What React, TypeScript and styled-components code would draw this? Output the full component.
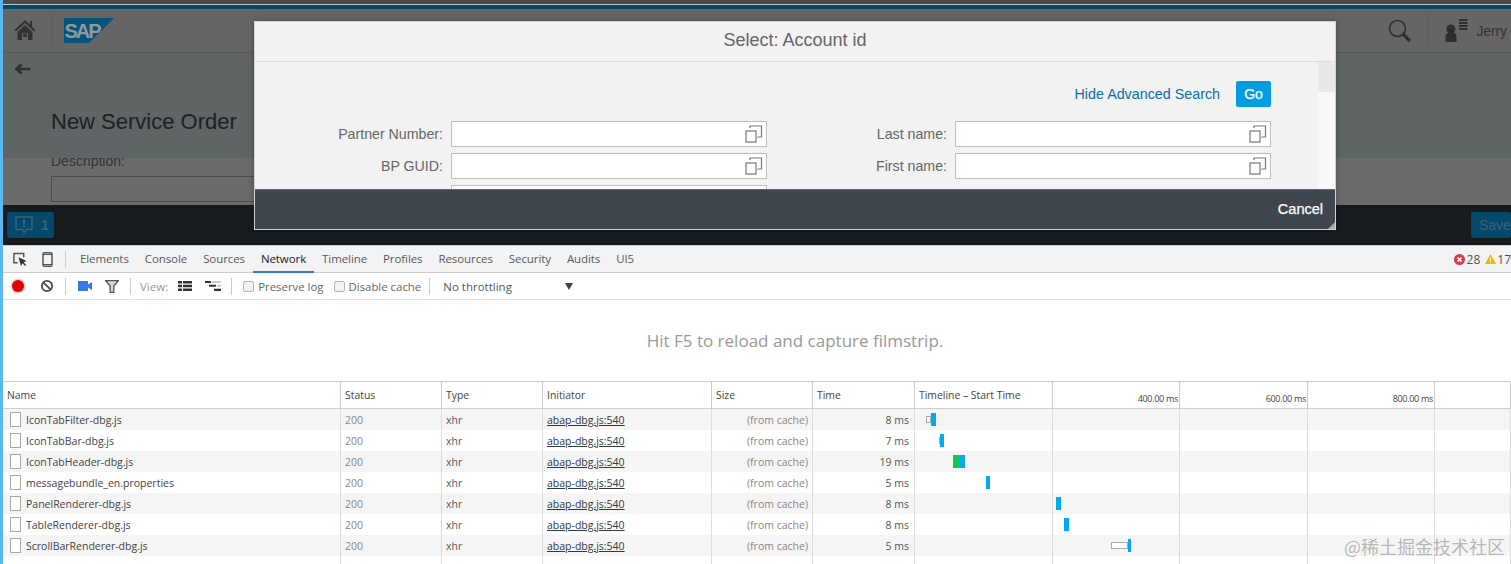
import React from "react";
import styled, { createGlobalStyle } from "styled-components";

const Global = createGlobalStyle`
  html, body { margin: 0; padding: 0; background: #fff; }
  body { font-family: "Liberation Sans", Arial, sans-serif; }
  * { box-sizing: border-box; }
`;

const Page = styled.div`
  width: 1511px;
  height: 564px;
  display: flex;
  overflow: hidden;
  position: relative;
`;
const Stripe = styled.div`
  width: 3px;
  flex: none;
  background: #5ab7f1;
`;
const Main = styled.div`
  flex: 1;
  min-width: 0;
  display: flex;
  flex-direction: column;
`;

/* ---------- dimmed application ---------- */
const AppArea = styled.div`
  height: 246px;
  flex: none;
  display: flex;
  flex-direction: column;
  border-bottom: 1px solid #cfcfcf;
`;
const TopStrip = styled.div`
  height: 5px;
  flex: none;
  background: #4b4b4b;
  border-bottom: 1px solid #c4c4c4;
`;
const BlueBand = styled.div`
  height: 4px;
  flex: none;
  background: #03476a;
`;
const Shell = styled.header`
  height: 44px;
  flex: none;
  display: flex;
  align-items: center;
  background: #656565;
  border-bottom: 1px solid #595959;
  padding: 0 4px 0 11px;
`;
const ShellDivider = styled.div<{ $ml: number; $mr: number }>`
  width: 1px;
  height: 32px;
  background: #5a5a5a;
  margin: 0 ${(p) => p.$mr}px 0 ${(p) => p.$ml}px;
`;
const ShellSpacer = styled.div`
  flex: 1;
`;
const UserName = styled.span`
  font-size: 14px;
  color: #333;
  margin-left: 8px;
  white-space: nowrap;
  letter-spacing: -0.1px;
`;
const SubHeader = styled.div`
  height: 105px;
  flex: none;
  background: #5f6464;
  padding: 10px 0 0 11px;
  display: flex;
  flex-direction: column;
`;
const PageTitle = styled.h1`
  margin: 33px 0 0 37px;
  font-size: 22px;
  line-height: 28px;
  font-weight: 400;
  color: #1e2021;
`;
const FormArea = styled.div`
  height: 47px;
  flex: none;
  background: #6b6b6b;
  padding-left: 48px;
  overflow: hidden;
`;
const FormLabel = styled.div`
  font-size: 14px;
  line-height: 16px;
  color: #333;
  margin-top: -5px;
`;
const FormInput = styled.div`
  width: 700px;
  height: 26px;
  margin-top: 7px;
  border: 1px solid #4c4c4c;
`;
const AppFooter = styled.footer`
  height: 40px;
  flex: none;
  background: #171b1e;
  display: flex;
  align-items: center;
  justify-content: space-between;
  padding: 0 0 0 4px;
`;
const FooterButton = styled.div<{ $width: number }>`
  width: ${(p) => p.$width}px;
  height: 26px;
  background: #03496a;
  border-radius: 2px;
  display: flex;
  align-items: center;
  padding-left: 8px;
  gap: 8px;
  font-size: 14px;
  color: #3d6273;
  font-weight: 400;
  overflow: hidden;
  white-space: nowrap;
`;
const CountText = styled.span`
  font-weight: 700;
  font-size: 14px;
`;

/* ---------- dialog ---------- */
const Dialog = styled.div`
  position: absolute;
  left: 254px;
  top: 21px;
  width: 1082px;
  height: 209px;
  display: flex;
  flex-direction: column;
  background: #f2f2f2;
  border: 1px solid #d2d2d2;
  box-shadow: 0 0 6px rgba(0, 0, 0, 0.3);
`;
const DialogHeader = styled.div`
  height: 40px;
  flex: none;
  display: flex;
  align-items: center;
  justify-content: center;
  font-size: 18px;
  color: #666;
  padding: 0 0 2px 0;
  border-bottom: 1px solid #dcdcdc;
`;
const DialogBody = styled.div`
  flex: 1;
  min-height: 0;
  display: flex;
  overflow: hidden;
`;
const SearchForm = styled.div`
  flex: 1;
  padding: 19px 47px 0 0;
`;
const SearchActions = styled.div`
  display: flex;
  justify-content: flex-end;
  align-items: center;
  gap: 16px;
  height: 26px;
  margin-bottom: 14px;
`;
const SearchLink = styled.a`
  font-size: 14.3px;
  color: #0a6ea6;
`;
const GoButton = styled.div`
  width: 35px;
  height: 26px;
  border-radius: 2px;
  background: #009de0;
  color: #fff;
  font-size: 14px;
  -webkit-text-stroke: 0.25px #fff;
  display: flex;
  align-items: center;
  justify-content: center;
`;
const FieldGrid = styled.div`
  display: grid;
  grid-template-columns: 196px 316px 188px 316px;
  grid-auto-rows: 26px;
  row-gap: 6px;
`;
const FieldLabel = styled.label`
  font-size: 14.2px;
  color: #666;
  text-align: right;
  padding-right: 8px;
  line-height: 26px;
  white-space: nowrap;
`;
const FieldBox = styled.div`
  background: #fff;
  border: 1px solid #bfbfbf;
  display: flex;
  align-items: center;
  justify-content: flex-end;
  padding-right: 3px;
`;
const Scrollbar = styled.div`
  width: 17px;
  flex: none;
  background: #f8f8f8;
`;
const ScrollThumb = styled.div`
  height: 30px;
  background: #e8e8e8;
`;
const DialogFooter = styled.div`
  height: 40px;
  flex: none;
  background: #3f464d;
  border-top: 1px solid #5f666c;
  display: flex;
  align-items: center;
  justify-content: flex-end;
  padding: 0 12px 2px 0;
  position: relative;
  color: #fff;
  font-size: 14.5px;
  -webkit-text-stroke: 0.25px #fff;
`;
const ResizeGrip = styled.div`
  position: absolute;
  right: 0;
  bottom: 0;
  width: 0;
  height: 0;
  border-left: 7px solid transparent;
  border-bottom: 7px solid #a9a9a9;
`;

/* ---------- devtools ---------- */
const Devtools = styled.div`
  flex: 1;
  min-height: 0;
  display: flex;
  flex-direction: column;
  font-family: "Open Sans", "Liberation Sans", sans-serif;
  font-size: 11px;
  color: #333;
  background: #fff;
`;
const TabBar = styled.div`
  height: 27px;
  flex: none;
  display: flex;
  align-items: stretch;
  background: #f3f3f3;
  border-bottom: 1px solid #ccc;
  position: relative;
`;
const ToolSlot = styled.div<{ $w: number; $ml?: number }>`
  width: ${(p) => p.$w}px;
  margin-left: ${(p) => p.$ml ?? 0}px;
  flex: none;
  display: flex;
  align-items: center;
  justify-content: center;
`;
const ToolSep = styled.div<{ $ml: number; $mr: number }>`
  width: 1px;
  height: 17px;
  align-self: center;
  flex: none;
  background: #ccc;
  margin: 0 ${(p) => p.$mr}px 0 ${(p) => p.$ml}px;
`;
const Tab = styled.div<{ $active?: boolean }>`
  padding: 0 8px;
  display: flex;
  align-items: center;
  font-size: 11.5px;
  letter-spacing: -0.09px;
  color: ${(p) => (p.$active ? "#222" : "#5a5a5a")};
  border-bottom: 2px solid ${(p) => (p.$active ? "#3879d9" : "transparent")};
  margin-bottom: -1px;
`;
const Status = styled.div`
  margin-left: auto;
  display: flex;
  align-items: center;
  font-size: 12px;
  color: #555;
  white-space: nowrap;
`;
const StatusCount = styled.span<{ $ml: number; $mr: number }>`
  margin: 0 ${(p) => p.$mr}px 0 ${(p) => p.$ml}px;
`;
const Toolbar = styled.div`
  height: 27px;
  flex: none;
  display: flex;
  align-items: center;
  border-bottom: 1px solid #e2e2e2;
`;
const MutedLabel = styled.span`
  color: #999;
  font-size: 11.5px;
`;
const CheckWrap = styled.label<{ $ml: number }>`
  display: flex;
  align-items: center;
  gap: 4px;
  margin-left: ${(p) => p.$ml}px;
  color: #666;
  font-size: 11.4px;
  white-space: nowrap;
`;
const CheckBox = styled.span`
  width: 11px;
  height: 11px;
  border: 1px solid #b5b5b5;
  border-radius: 2px;
  background: #f2f2f2;
`;
const ThrottleText = styled.span`
  margin-left: 13px;
  width: 122px;
  color: #555;
  font-size: 11.5px;
  white-space: nowrap;
`;
const Caret = styled.span`
  width: 0;
  height: 0;
  border-left: 4px solid transparent;
  border-right: 4px solid transparent;
  border-top: 7px solid #444;
`;
const Filmstrip = styled.div`
  height: 81px;
  flex: none;
  display: flex;
  align-items: center;
  justify-content: center;
  font-size: 17px;
  color: #999;
  padding: 0 0 0 76px;
`;
const COLUMNS = "338px 101px 101px 169px 101px 102px 138px 127px 128px 127px 1fr";
const HeaderRow = styled.div`
  height: 28px;
  flex: none;
  display: grid;
  grid-template-columns: ${COLUMNS};
  border-top: 1px solid #ccc;
  border-bottom: 1px solid #ccc;
`;
const HeadCell = styled.div`
  border-right: 1px solid #ccc;
  padding-left: 4px;
  display: flex;
  align-items: center;
  font-size: 10.4px;
  color: #444;
  white-space: nowrap;
  overflow: hidden;
`;
const TickCell = styled.div`
  border-right: 1px solid #ccc;
  display: flex;
  align-items: flex-end;
  justify-content: flex-end;
  padding: 0 1px 3px 0;
  font-size: 9px;
  letter-spacing: -0.3px;
  color: #444;
  white-space: nowrap;
`;
const Row = styled.div<{ $striped: boolean }>`
  height: 21px;
  flex: none;
  display: grid;
  grid-template-columns: ${COLUMNS};
  background: ${(p) => (p.$striped ? "#f5f5f5" : "#fff")};
  position: relative;
`;
const Cell = styled.div<{ $align?: string; $tone?: string; $pr?: number }>`
  border-right: 1px solid #dcdcdc;
  padding: 0 ${(p) => p.$pr ?? 4}px 0 4px;
  display: flex;
  align-items: center;
  justify-content: ${(p) => p.$align ?? "flex-start"};
  font-size: 10.5px;
  color: ${(p) => p.$tone ?? "#444"};
  white-space: nowrap;
  overflow: hidden;
`;
const NameCell = styled(Cell)`
  padding-left: 7px;
  gap: 5px;
`;
const FileIcon = styled.span`
  width: 11px;
  height: 15px;
  flex: none;
  background: #fff;
  border: 1px solid #a8a8a8;
`;
const InitiatorLink = styled.span`
  text-decoration: underline;
  color: #303942;
`;
const Bar = styled.div<{ $left: number; $width: number; $color: string }>`
  position: absolute;
  top: 4px;
  height: 13px;
  left: ${(p) => p.$left - 3}px;
  width: ${(p) => p.$width}px;
  background: ${(p) => p.$color};
`;
const WaitBar = styled.div<{ $left: number; $width: number }>`
  position: absolute;
  top: 7px;
  height: 7px;
  left: ${(p) => p.$left - 3}px;
  width: ${(p) => p.$width}px;
  background: #fff;
  border: 1px solid #a8a8a8;
`;
const Watermark = styled.div`
  position: absolute;
  right: 6px;
  bottom: 8px;
  font-family: "Noto Sans CJK SC", "Liberation Sans", sans-serif;
  font-size: 18px;
  line-height: 20px;
  color: rgba(130, 130, 130, 0.55);
  white-space: nowrap;
`;

/* ---------- icons ---------- */
const HomeIcon = () => (
  <svg width="22" height="21" viewBox="0 0 22 21">
    <path d="M11 0 L0.5 10 L2 11.5 L11 3 L20 11.5 L21.5 10 L18 6.7 V1 H16 V4.8 Z" fill="#333" />
    <path d="M3.5 12 L11 5 L18.500 12 V20 H14 V13 H8 V20 H3.500 Z M9 13.500 H13 V17 H9 Z" fill="#333" fillRule="evenodd" />
  </svg>
);
const SapLogo = () => (
  <svg width="50" height="25" viewBox="0 0 50 25" style={{ display: "block" }}>
    <polygon points="0,0 50,0 25,25 0,25" fill="#04547c" />
    <text x="0.5" y="20" fontFamily="Liberation Sans" fontWeight="700" fontSize="20" fill="#8f9a9f" textLength="37">
      SAP
    </text>
  </svg>
);
const BackArrow = () => (
  <svg width="17" height="12" viewBox="0 0 17 12" style={{ display: "block" }}>
    <path d="M6.500 0.500 L8.500 2.400 L5.800 4.700 H16.500 V7.300 H5.800 L8.500 9.600 L6.500 11.500 L0.500 6 Z" fill="#2e2e2e" />
  </svg>
);
const SearchIcon = () => (
  <svg width="24" height="24" viewBox="0 0 24 24">
    <circle cx="9.500" cy="9.500" r="8" fill="none" stroke="#2f2f2f" strokeWidth="1.600" />
    <path d="M15 15 L22 22" stroke="#2f2f2f" strokeWidth="3.200" />
  </svg>
);
const UserIcon = () => (
  <svg width="23" height="23" viewBox="0 0 23 23">
    <circle cx="6" cy="10" r="4.500" fill="#2e2e2e" />
    <path d="M0.500 23 V17 Q1 14 4 14 H8 Q11.500 14 11.500 17 V23 Z" fill="#2e2e2e" />
    <path d="M14 1 H22.500 M14 4 H22.500 M14 7 H22.500 M14 10 H22.500" stroke="#2e2e2e" strokeWidth="1.800" />
  </svg>
);
const MessageIcon = () => (
  <svg width="18" height="18" viewBox="0 0 18 18">
    <path d="M1 1 H17 V13.500 H11.500 L9 16.500 L7.500 13.500 H1 Z" fill="none" stroke="#3d6273" strokeWidth="1.500" />
    <path d="M8 3.500 H10 V8.500 H8 Z M8 9.800 H10 V11.500 H8 Z" fill="#3d6273" />
  </svg>
);
const ValueHelp = () => (
  <svg width="18" height="18" viewBox="0 0 18 18">
    <rect x="1" y="6" width="10" height="11" fill="none" stroke="#777" strokeWidth="1.200" />
    <path d="M5 3 V1 H16.500 V12 H12.500" fill="none" stroke="#777" strokeWidth="1.200" />
  </svg>
);
const InspectIcon = () => (
  <svg width="15" height="15" viewBox="0 0 15 15">
    <path d="M5 11 H1 V1 H11.500 V5" fill="none" stroke="#555" strokeWidth="1.600" />
    <path d="M6 5 L14.500 9 L11.500 10.500 L14 13.500 L13 14.500 L10.300 11.500 L8.500 14.500 Z" fill="#333" />
  </svg>
);
const DeviceIcon = () => (
  <svg width="11" height="15" viewBox="0 0 11 15">
    <rect x="1" y="0.800" width="9" height="13.400" rx="1.300" fill="none" stroke="#555" strokeWidth="1.500" />
    <path d="M1 2.500 H10 M1 12.500 H10" stroke="#555" strokeWidth="1" />
  </svg>
);
const RecordIcon = () => (
  <svg width="16" height="16" viewBox="0 0 16 16">
    <circle cx="8" cy="8" r="7.500" fill="#e9a4a4" opacity="0.6" />
    <circle cx="8" cy="8" r="6" fill="#e00000" />
  </svg>
);
const ClearIcon = () => (
  <svg width="14" height="14" viewBox="0 0 14 14">
    <circle cx="7" cy="7" r="5.200" fill="none" stroke="#4d4d4d" strokeWidth="1.800" />
    <path d="M3.300 3.300 L10.700 10.700" stroke="#4d4d4d" strokeWidth="1.800" />
  </svg>
);
const CameraIcon = () => (
  <svg width="14" height="10" viewBox="0 0 14 10">
    <path d="M0 0 H10 V3.500 L14 1 V9 L10 6.500 V10 H0 Z" fill="#3b78e7" />
  </svg>
);
const FilterIcon = () => (
  <svg width="14" height="13" viewBox="0 0 14 13">
    <path d="M0.700 0.700 H13.300 L8.800 6 V12.300 H5.200 V6 Z" fill="#d8d8d8" stroke="#555" strokeWidth="1.300" />
  </svg>
);
const ListIcon = () => (
  <svg width="14" height="10" viewBox="0 0 14 10">
    <path d="M0 0 H4 V2.500 H0 Z M5 0 H14 V2.500 H5 Z M0 3.700 H4 V6.200 H0 Z M5 3.700 H14 V6.200 H5 Z M0 7.500 H4 V10 H0 Z M5 7.500 H14 V10 H5 Z" fill="#333" />
  </svg>
);
const TreeIcon = () => (
  <svg width="16" height="10" viewBox="0 0 16 10">
    <path d="M0 0 H6 V2 H0 Z M4 3.800 H11 V5.800 H4 Z M9 7.800 H16 V10 H9 Z" fill="#333" />
    <path d="M7 0 H16 V2 H7 Z M12 3.800 H16 V5.800 H12 Z" fill="#ccc" />
  </svg>
);
const ErrorIcon = () => (
  <svg width="11" height="11" viewBox="0 0 11 11">
    <circle cx="5.500" cy="5.500" r="5.500" fill="#e2394a" />
    <path d="M3.500 3.500 L7.500 7.500 M7.500 3.500 L3.500 7.500" stroke="#fff" strokeWidth="1.500" />
  </svg>
);
const WarnIcon = () => (
  <svg width="11" height="10" viewBox="0 0 11 10">
    <path d="M5.500 0 L11 10 H0 Z" fill="#f4b400" />
    <path d="M5 3.500 H6 V6.700 H5 Z M5 7.500 H6 V8.700 H5 Z" fill="#fff" />
  </svg>
);

/* ---------- data ---------- */
const TABS = ["Elements", "Console", "Sources", "Network", "Timeline", "Profiles", "Resources", "Security", "Audits", "UI5"];
const REQUESTS = [
  { name: "IconTabFilter-dbg.js", time: "8 ms", wait: [926, 5], bars: [[931, 5, "#03a9f4"]] },
  { name: "IconTabBar-dbg.js", time: "7 ms", wait: [939, 2], bars: [[940, 4, "#03a9f4"]] },
  { name: "IconTabHeader-dbg.js", time: "19 ms", wait: null, bars: [[953, 7, "#0cc75a"], [960, 5, "#03a9f4"]] },
  { name: "messagebundle_en.properties", time: "5 ms", wait: null, bars: [[986, 4, "#03a9f4"]] },
  { name: "PanelRenderer-dbg.js", time: "8 ms", wait: null, bars: [[1056, 5, "#03a9f4"]] },
  { name: "TableRenderer-dbg.js", time: "8 ms", wait: null, bars: [[1064, 5, "#03a9f4"]] },
  { name: "ScrollBarRenderer-dbg.js", time: "5 ms", wait: [1111, 17], bars: [[1128, 3, "#03a9f4"]] },
] as { name: string; time: string; wait: number[] | null; bars: [number, number, string][] }[];

const Field = ({ label }: { label: string }) => (
  <>
    <FieldLabel>{label}</FieldLabel>
    <FieldBox>
      <ValueHelp />
    </FieldBox>
  </>
);

export default function App() {
  return (
    <Page>
      <Global />
      <Stripe />
      <Main>
        <AppArea>
          <TopStrip />
          <BlueBand />
          <Shell>
            <HomeIcon />
            <ShellDivider $ml={15} $mr={12} />
            <SapLogo />
            <ShellSpacer />
            <SearchIcon />
            <ShellDivider $ml={15} $mr={17} />
            <UserIcon />
            <UserName>Jerry</UserName>
          </Shell>
          <SubHeader>
            <BackArrow />
            <PageTitle>New Service Order</PageTitle>
          </SubHeader>
          <FormArea>
            <FormLabel>Description:</FormLabel>
            <FormInput />
          </FormArea>
          <AppFooter>
            <FooterButton $width={47}>
              <MessageIcon />
              <CountText>1</CountText>
            </FooterButton>
            <FooterButton $width={40}>Save</FooterButton>
          </AppFooter>
        </AppArea>
        <Devtools>
          <TabBar>
            <ToolSlot $w={14} $ml={10}>
              <InspectIcon />
            </ToolSlot>
            <ToolSlot $w={12} $ml={14}>
              <DeviceIcon />
            </ToolSlot>
            <ToolSep $ml={12} $mr={6} />
            {TABS.map((t) => (
              <Tab key={t} $active={t === "Network"}>
                {t}
              </Tab>
            ))}
            <Status>
              <ErrorIcon />
              <StatusCount $ml={2} $mr={5}>28</StatusCount>
              <WarnIcon />
              <StatusCount $ml={1} $mr={0}>17</StatusCount>
            </Status>
          </TabBar>
          <Toolbar>
            <ToolSlot $w={30}>
              <RecordIcon />
            </ToolSlot>
            <ToolSlot $w={28}>
              <ClearIcon />
            </ToolSlot>
            <ToolSep $ml={4} $mr={5} />
            <ToolSlot $w={28}>
              <CameraIcon />
            </ToolSlot>
            <ToolSlot $w={26}>
              <FilterIcon />
            </ToolSlot>
            <ToolSep $ml={5} $mr={9} />
            <MutedLabel>View:</MutedLabel>
            <ToolSlot $w={22} $ml={6}>
              <ListIcon />
            </ToolSlot>
            <ToolSlot $w={22} $ml={6}>
              <TreeIcon />
            </ToolSlot>
            <ToolSep $ml={7} $mr={0} />
            <CheckWrap $ml={11}>
              <CheckBox />
              Preserve log
            </CheckWrap>
            <CheckWrap $ml={10}>
              <CheckBox />
              Disable cache
            </CheckWrap>
            <ToolSep $ml={8} $mr={0} />
            <ThrottleText>No throttling</ThrottleText>
            <Caret />
          </Toolbar>
          <Filmstrip>Hit F5 to reload and capture filmstrip.</Filmstrip>
          <HeaderRow>
            <HeadCell>Name</HeadCell>
            <HeadCell>Status</HeadCell>
            <HeadCell>Type</HeadCell>
            <HeadCell>Initiator</HeadCell>
            <HeadCell>Size</HeadCell>
            <HeadCell>Time</HeadCell>
            <HeadCell>Timeline – Start Time</HeadCell>
            <TickCell>400.00 ms</TickCell>
            <TickCell>600.00 ms</TickCell>
            <TickCell>800.00 ms</TickCell>
            <TickCell />
          </HeaderRow>
          {REQUESTS.map((r, i) => (
            <Row key={r.name} $striped={i % 2 === 0}>
              <NameCell>
                <FileIcon />
                {r.name}
              </NameCell>
              <Cell $tone="#888">200</Cell>
              <Cell $tone="#555">xhr</Cell>
              <Cell>
                <InitiatorLink>abap-dbg.js:540</InitiatorLink>
              </Cell>
              <Cell $align="flex-end" $tone="#888">(from cache)</Cell>
              <Cell $align="flex-end" $tone="#555" $pr={5}>{r.time}</Cell>
              <Cell />
              <Cell />
              <Cell />
              <Cell />
              <Cell />
              {r.wait && <WaitBar $left={r.wait[0]} $width={r.wait[1]} />}
              {r.bars.map(([l, w, c]) => (
                <Bar key={l} $left={l} $width={w} $color={c} />
              ))}
            </Row>
          ))}
          <Row $striped={false}>
            <Cell /><Cell /><Cell /><Cell /><Cell /><Cell /><Cell /><Cell /><Cell /><Cell /><Cell />
          </Row>
        </Devtools>
      </Main>
      <Dialog>
        <DialogHeader>Select: Account id</DialogHeader>
        <DialogBody>
          <SearchForm>
            <SearchActions>
              <SearchLink>Hide Advanced Search</SearchLink>
              <GoButton>Go</GoButton>
            </SearchActions>
            <FieldGrid>
              <Field label="Partner Number:" />
              <Field label="Last name:" />
              <Field label="BP GUID:" />
              <Field label="First name:" />
              <FieldLabel />
              <FieldBox />
            </FieldGrid>
          </SearchForm>
          <Scrollbar>
            <ScrollThumb />
          </Scrollbar>
        </DialogBody>
        <DialogFooter>
          Cancel
          <ResizeGrip />
        </DialogFooter>
      </Dialog>
      <Watermark>@稀土掘金技术社区</Watermark>
    </Page>
  );
}
